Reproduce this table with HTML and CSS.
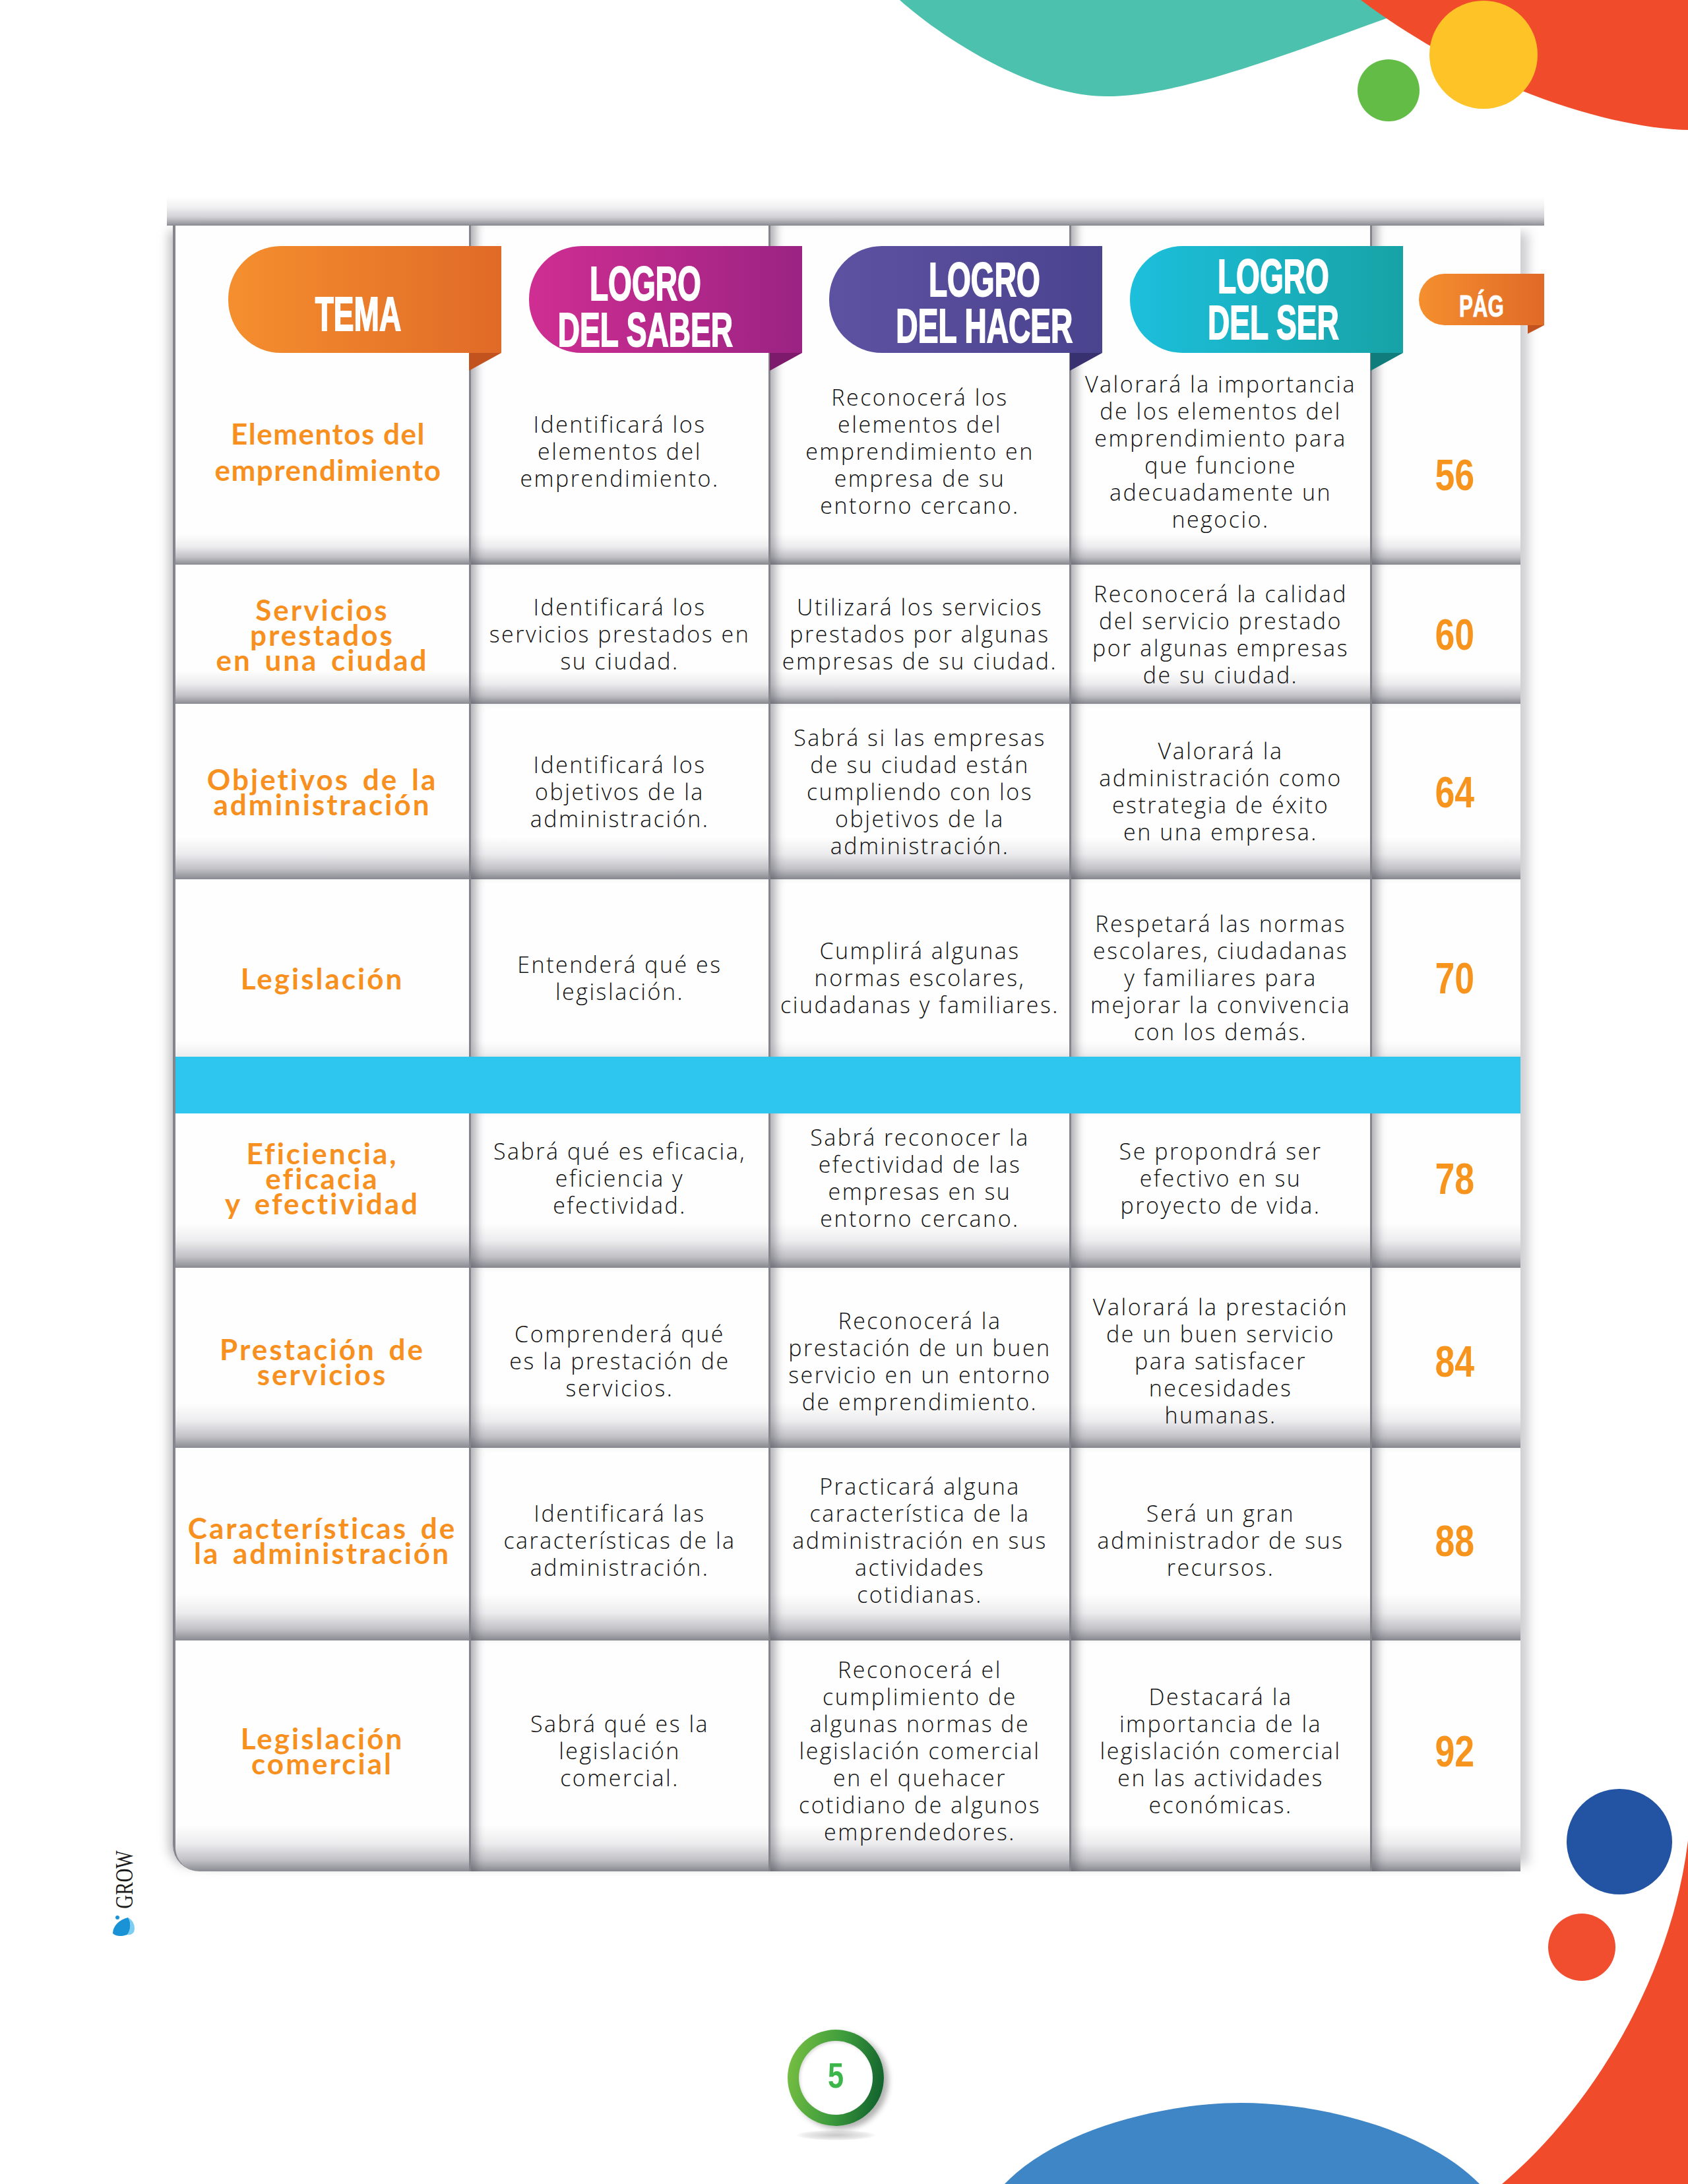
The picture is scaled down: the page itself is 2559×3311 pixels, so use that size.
FILE: index.html
```html
<!DOCTYPE html>
<html lang="es">
<head>
<meta charset="utf-8">
<title>Tabla de contenidos</title>
<link rel="stylesheet" href="styles.css">
</head>
<body>
<div class="page">
  <svg class="deco" width="2559" height="3311" viewBox="0 0 2559 3311" xmlns="http://www.w3.org/2000/svg">
    <path fill="#4cc1ad" d="M1364,0 C1419,50 1560,146 1677,146 C1800,146 1980,70 2180,0 Z"/>
    <path fill="#f04c2b" d="M2063,0 L2559,0 L2559,197 C2450,195 2250,140 2063,0 Z"/>
    <circle cx="2105" cy="137" r="47" fill="#62bc46"/>
    <circle cx="2249" cy="83" r="82" fill="#fec326"/>
    <path fill="#3f86c7" d="M1523,3311 C1600,3230 1760,3188 1882,3188 C2004,3188 2164,3230 2243,3311 Z"/>
    <path fill="#f04c2b" d="M2559,2790 C2535,2990 2420,3190 2277,3311 L2559,3311 Z"/>
    <circle cx="2455" cy="2792" r="80" fill="#2254a3"/>
    <circle cx="2398" cy="2952" r="51" fill="#f04e2f"/>
  </svg>

  <div class="grow">GROW</div>
  <svg class="grow-icon" width="37" height="33" viewBox="0 0 37 33" xmlns="http://www.w3.org/2000/svg">
    <circle cx="9" cy="4" r="3" fill="#1a93d6"/>
    <path fill="#1a93d6" d="M2 28 C2 17 12 7 25 4 C30 11 30 22 24 30 C16 33 6 33 2 28 Z"/>
    <path fill="#7ccff2" d="M25 4 C33 8 37 18 34 26 C31 30 27 31 24 30 C30 22 30 11 25 4 Z"/>
  </svg>

  <main class="sheet">
    <div class="topbar"></div>
    <div class="tbl">
      <div class="row r1">
        <div class="cell c1 head">
          <div class="badge b-tema"><span class="bt">TEMA</span></div>
          <div class="txt txt-topic"><p class="topic big">Elementos del<br>emprendimiento</p></div>
        </div>
        <div class="cell c2 head">
          <div class="badge b-saber"><span class="bt">LOGRO<br>DEL SABER</span></div>
          <div class="txt"><p class="desc">Identificará los<br>elementos del<br>emprendimiento.</p></div>
        </div>
        <div class="cell c3 head">
          <div class="badge b-hacer"><span class="bt">LOGRO<br>DEL HACER</span></div>
          <div class="txt"><p class="desc">Reconocerá los<br>elementos del<br>emprendimiento en<br>empresa de su<br>entorno cercano.</p></div>
        </div>
        <div class="cell c4 head">
          <div class="badge b-ser"><span class="bt">LOGRO<br>DEL SER</span></div>
          <div class="txt"><p class="desc">Valorará la importancia<br>de los elementos del<br>emprendimiento para<br>que funcione<br>adecuadamente un<br>negocio.</p></div>
        </div>
        <div class="cell c5 head">
          <div class="badge b-pag"><span class="bt">PÁG</span></div>
          <div class="txt txt-num"><span class="num">56</span></div>
        </div>
      </div>

      <div class="row r2">
        <div class="cell c1"><p class="topic">Servicios<br>prestados<br>en una ciudad</p></div>
        <div class="cell c2"><p class="desc">Identificará los<br>servicios prestados en<br>su ciudad.</p></div>
        <div class="cell c3"><p class="desc">Utilizará los servicios<br>prestados por algunas<br>empresas de su ciudad.</p></div>
        <div class="cell c4"><p class="desc">Reconocerá la calidad<br>del servicio prestado<br>por algunas empresas<br>de su ciudad.</p></div>
        <div class="cell c5"><span class="num">60</span></div>
      </div>

      <div class="row r3">
        <div class="cell c1"><p class="topic">Objetivos de la<br>administración</p></div>
        <div class="cell c2"><p class="desc">Identificará los<br>objetivos de la<br>administración.</p></div>
        <div class="cell c3"><p class="desc">Sabrá si las empresas<br>de su ciudad están<br>cumpliendo con los<br>objetivos de la<br>administración.</p></div>
        <div class="cell c4"><p class="desc">Valorará la<br>administración como<br>estrategia de éxito<br>en una empresa.</p></div>
        <div class="cell c5"><span class="num">64</span></div>
      </div>

      <div class="row r4">
        <div class="cell c1"><p class="topic">Legislación</p></div>
        <div class="cell c2"><p class="desc">Entenderá qué es<br>legislación.</p></div>
        <div class="cell c3"><p class="desc">Cumplirá algunas<br>normas escolares,<br>ciudadanas y familiares.</p></div>
        <div class="cell c4"><p class="desc">Respetará las normas<br>escolares, ciudadanas<br>y familiares para<br>mejorar la convivencia<br>con los demás.</p></div>
        <div class="cell c5"><span class="num">70</span></div>
      </div>

      <div class="band"></div>

      <div class="row r5">
        <div class="cell c1"><p class="topic">Eficiencia,<br>eficacia<br>y efectividad</p></div>
        <div class="cell c2"><p class="desc">Sabrá qué es eficacia,<br>eficiencia y<br>efectividad.</p></div>
        <div class="cell c3"><p class="desc">Sabrá reconocer la<br>efectividad de las<br>empresas en su<br>entorno cercano.</p></div>
        <div class="cell c4"><p class="desc">Se propondrá ser<br>efectivo en su<br>proyecto de vida.</p></div>
        <div class="cell c5"><span class="num">78</span></div>
      </div>

      <div class="row r6">
        <div class="cell c1"><p class="topic">Prestación de<br>servicios</p></div>
        <div class="cell c2"><p class="desc">Comprenderá qué<br>es la prestación de<br>servicios.</p></div>
        <div class="cell c3"><p class="desc">Reconocerá la<br>prestación de un buen<br>servicio en un entorno<br>de emprendimiento.</p></div>
        <div class="cell c4"><p class="desc">Valorará la prestación<br>de un buen servicio<br>para satisfacer<br>necesidades<br>humanas.</p></div>
        <div class="cell c5"><span class="num">84</span></div>
      </div>

      <div class="row r7">
        <div class="cell c1"><p class="topic">Características de<br>la administración</p></div>
        <div class="cell c2"><p class="desc">Identificará las<br>características de la<br>administración.</p></div>
        <div class="cell c3"><p class="desc">Practicará alguna<br>característica de la<br>administración en sus<br>actividades<br>cotidianas.</p></div>
        <div class="cell c4"><p class="desc">Será un gran<br>administrador de sus<br>recursos.</p></div>
        <div class="cell c5"><span class="num">88</span></div>
      </div>

      <div class="row r8">
        <div class="cell c1"><p class="topic">Legislación<br>comercial</p></div>
        <div class="cell c2"><p class="desc">Sabrá qué es la<br>legislación<br>comercial.</p></div>
        <div class="cell c3"><p class="desc">Reconocerá el<br>cumplimiento de<br>algunas normas de<br>legislación comercial<br>en el quehacer<br>cotidiano de algunos<br>emprendedores.</p></div>
        <div class="cell c4"><p class="desc">Destacará la<br>importancia de la<br>legislación comercial<br>en las actividades<br>económicas.</p></div>
        <div class="cell c5"><span class="num">92</span></div>
      </div>
    </div>

    <footer class="foot">
      <div class="ring"><div class="ring-in"><span class="pnum">5</span></div></div>
      <div class="floor"></div>
    </footer>
  </main>
</div>
</body>
</html>
```

FILE: styles.css
```css
* { box-sizing: border-box; }
html, body { margin: 0; padding: 0; background: #fff; }
body { font-family: "Lato", "Liberation Sans", sans-serif; }

.page {
  position: relative;
  width: 2559px;
  height: 3311px;
  overflow: hidden;
  background: #fff;
}

.deco { position: absolute; left: 0; top: 0; }

.grow {
  position: absolute;
  left: 173px;
  top: 2789px;
  width: 30px;
  height: 119px;
  writing-mode: vertical-rl;
  font-family: "Liberation Serif", serif;
  font-size: 38px;
  line-height: 30px;
  color: #1a1a1a;
  transform: rotate(180deg) scaleY(0.76);
}
.grow-icon { position: absolute; left: 169px; top: 2903px; }

.sheet { padding-top: 298px; }

.topbar {
  margin-left: 253px;
  width: 2088px;
  height: 44px;
  background: linear-gradient(to bottom, #ffffff 0%, #f1f1f3 35%, #d2d2d6 70%, #a2a2a9 92%, #8c8c94 100%);
}

.tbl {
  margin-left: 262px;
  width: 2043px;
  border-left: 4px solid #85858d;
  border-bottom-left-radius: 40px;
  box-shadow: -14px 0 16px -8px rgba(70, 70, 80, 0.35), 22px 0 16px -10px rgba(80, 80, 90, 0.28);
}

.row {
  display: grid;
  grid-template-columns: 445px 454px 456px 456px 228px;
  --g: 60px;
}
.r1 { height: 514px; --g: 46px; }
.r2 { height: 211px; --g: 50px; }
.r3 { height: 266px; --g: 64px; }
.r4 { height: 269px; }
.r5 { height: 234px; --g: 68px; }
.r6 { height: 273px; --g: 68px; }
.r7 { height: 292px; --g: 70px; }
.r8 { height: 350px; --g: 70px; }

.cell {
  display: flex;
  align-items: center;
  justify-content: center;
  text-align: center;
  background: linear-gradient(to bottom, #fefefe 0, #fefefe calc(100% - var(--g)), #ececee calc(100% - var(--g) * 0.6), #c2c2c7 calc(100% - var(--g) * 0.25), #8a8a92 100%);
}
.r4 .cell {
  background: linear-gradient(to bottom, #fefefe 0, #fefefe calc(100% - 24px), #ededef 100%);
}
.cell + .cell {
  border-left: 3px solid #84848c;
  box-shadow: inset 16px 0 14px -8px rgba(70, 70, 80, 0.42);
}
.r8 .c1 { border-bottom-left-radius: 36px; }

.r4 .cell { padding-top: 30px; }
.r5 .cell { padding-bottom: 38px; }
.r6 .cell { padding-top: 10px; }
.r7 .cell { padding-bottom: 12px; }
.r8 .cell { padding-bottom: 16px; }

p { margin: 0; }

.topic {
  font-family: "Lato", "Liberation Sans", sans-serif;
  font-weight: 700;
  font-size: 44px;
  line-height: 38px;
  letter-spacing: 3px;
  word-spacing: 6px;
  color: #f7901e;
}
.topic.big { line-height: 55px; letter-spacing: 1.5px; word-spacing: 0; }

.desc {
  font-family: "Open Sans", "Lato", "Liberation Sans", sans-serif;
  font-weight: 300;
  font-size: 34px;
  line-height: 41px;
  letter-spacing: 2.5px;
  color: #111;
  white-space: nowrap;
}

.num {
  display: inline-block;
  font-family: "Liberation Sans", "Arial", sans-serif;
  font-weight: 700;
  font-size: 67px;
  line-height: 1;
  color: #f7941d;
  transform: scaleX(0.8);
  margin-left: 26px;
}

/* header row */
.head {
  flex-direction: column;
  align-items: stretch;
  justify-content: flex-start;
}
.head .txt {
  flex: 1;
  display: flex;
  align-items: center;
  justify-content: center;
  padding-bottom: 22px;
}
.head .txt-topic { padding-left: 18px; }
.head .txt-num { padding: 90px 0 0; }

.badge {
  position: relative;
  z-index: 2;
  width: 414px;
  height: 162px;
  margin-top: 31px;
  border-radius: 80px 0 0 80px;
  display: flex;
  align-items: center;
  justify-content: center;
  flex-shrink: 0;
}
.badge::after {
  content: "";
  position: absolute;
  right: 0;
  top: 100%;
  width: 49px;
  height: 27px;
  clip-path: polygon(0 0, 100% 0, 0 100%);
  background: var(--fold);
}
.bt {
  display: inline-block;
  font-family: "Liberation Sans", "Arial", sans-serif;
  font-weight: 700;
  font-size: 72px;
  line-height: 70px;
  color: #fff;
  -webkit-text-stroke: 2px #fff;
  text-align: center;
  transform: scaleX(0.64);
  white-space: nowrap;
}

.b-tema {
  margin-left: 80px;
  background: linear-gradient(to right, #f58f2e, #e06a27);
  --fold: #c2531f;
  padding: 44px 20px 0 0;
}
.b-saber {
  margin-left: 88px;
  background: linear-gradient(to right, #cf2e92, #9b2383);
  --fold: #7d1a6b;
  padding: 22px 61px 0 0;
}
.b-hacer {
  margin-left: 89px;
  background: linear-gradient(to right, #5d52a2, #4a438e);
  --fold: #373170;
  padding: 10px 0 0 56px;
}
.b-ser {
  margin-left: 89px;
  background: linear-gradient(to right, #1cbfdc, #17a3a6);
  --fold: #117c7c;
  padding: 0 0 0 20px;
}
.b-pag {
  margin-left: 71px;
  margin-top: 73px;
  width: 190px;
  height: 78px;
  border-radius: 39px 0 0 39px;
  background: linear-gradient(to right, #f58f2e, #e06a27);
  --fold: #c2531f;
  padding-top: 19px;
}
.b-pag::after { width: 25px; height: 13px; }
.b-pag .bt { font-size: 46px; line-height: 46px; transform: scaleX(0.68); -webkit-text-stroke: 1px #fff; }

.band {
  height: 86px;
  background: #2ec5ef;
}

/* footer page number */
.foot {
  margin-left: 1194px;
  margin-top: 240px;
  width: 160px;
}
.ring {
  width: 146px;
  height: 146px;
  border-radius: 50%;
  background: linear-gradient(100deg, #7cc242 0%, #3f9d3d 50%, #0b5a2b 100%);
  box-shadow: 7px 5px 8px rgba(0, 0, 0, 0.3);
  display: flex;
  align-items: center;
  justify-content: center;
}
.ring-in {
  width: 112px;
  height: 112px;
  border-radius: 50%;
  background: #fff;
  box-shadow: inset 2px 2px 4px rgba(0, 0, 0, 0.15);
  display: flex;
  align-items: center;
  justify-content: center;
}
.pnum {
  display: inline-block;
  font-family: "Liberation Sans", "Arial", sans-serif;
  font-weight: 700;
  font-size: 54px;
  line-height: 1;
  color: #3cb54a;
  transform: scaleX(0.8);
  margin-top: -8px;
}
.floor {
  width: 121px;
  height: 16px;
  margin: 6px 0 0 13px;
  border-radius: 50%;
  background: radial-gradient(ellipse at center, rgba(0, 0, 0, 0.22) 0%, rgba(0, 0, 0, 0.08) 55%, rgba(0, 0, 0, 0) 72%);
}
```
